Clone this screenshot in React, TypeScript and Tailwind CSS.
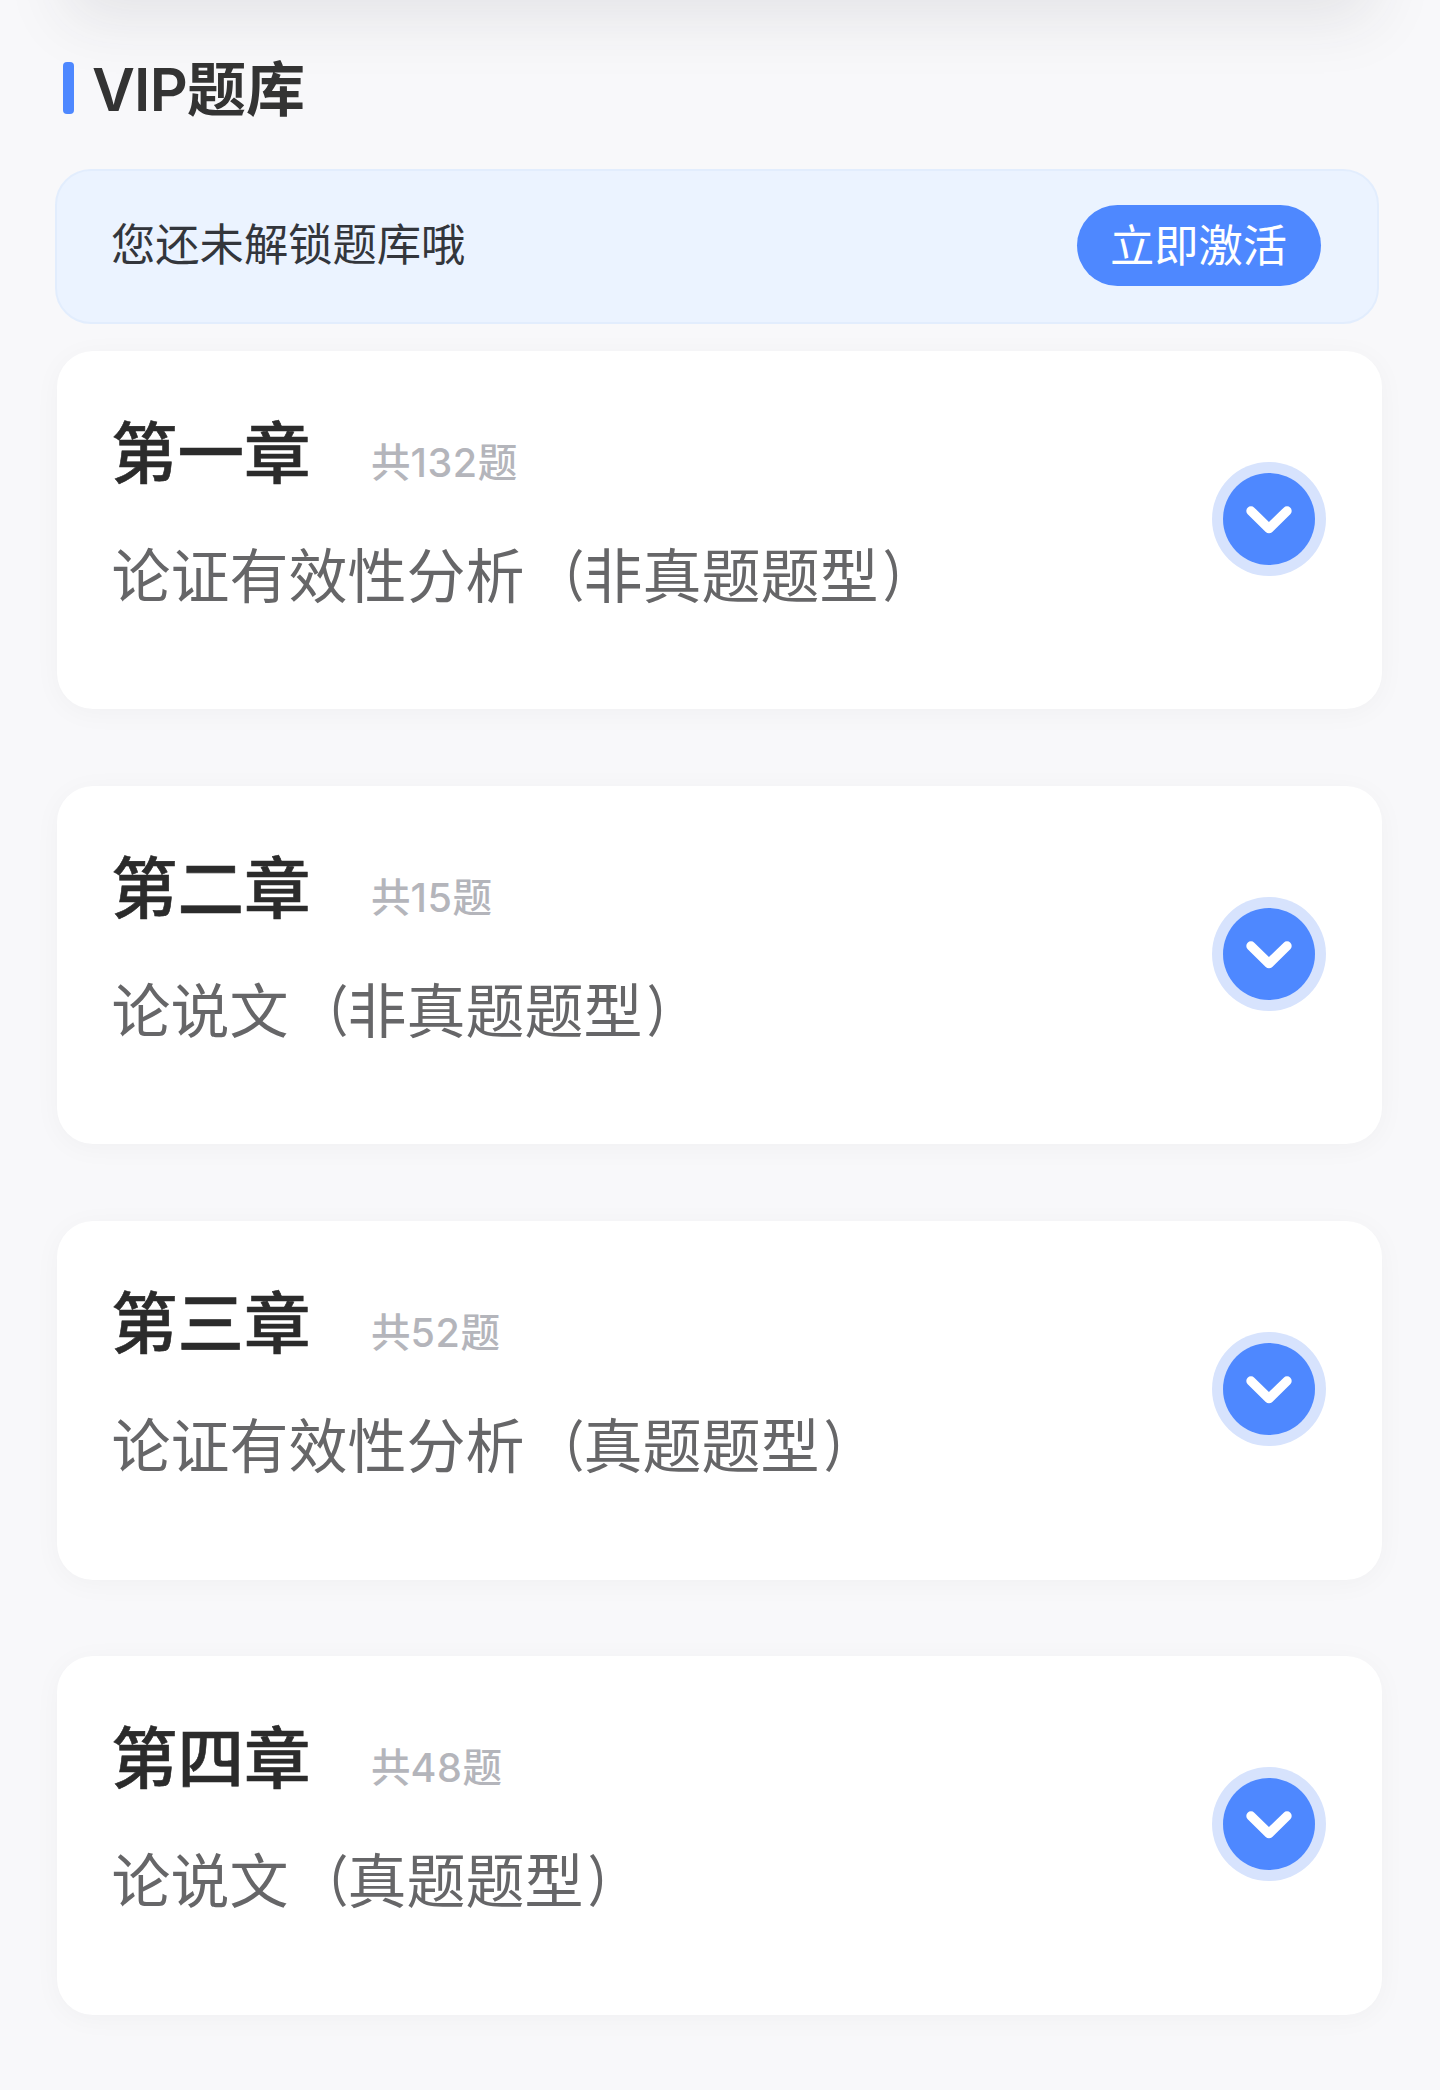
import React, { useState } from 'react';

interface Chapter {
  id: number;
  title: string;
  count: number;
  name: string;
  type: string;
}

const chapters: Chapter[] = [
  { id: 1, title: '第一章', count: 132, name: '论证有效性分析', type: '非真题题型' },
  { id: 2, title: '第二章', count: 15, name: '论说文', type: '非真题题型' },
  { id: 3, title: '第三章', count: 52, name: '论证有效性分析', type: '真题题型' },
  { id: 4, title: '第四章', count: 48, name: '论说文', type: '真题题型' },
];

function ExpandButton({ onClick }: { onClick: () => void }) {
  return (
    <button
      type="button"
      onClick={onClick}
      className="mt-[111px] flex h-[114px] w-[114px] shrink-0 items-center justify-center rounded-full bg-[#d7e3fd]"
    >
      <span className="flex h-[92px] w-[92px] items-center justify-center rounded-full bg-[#4e88ff] pt-[2px]">
        <svg width="46" height="28" viewBox="0 0 46 28" fill="none">
          <path
            d="M5 5 L23 22.6 L41 5"
            stroke="#fff"
            strokeWidth="9.4"
            strokeLinecap="round"
            strokeLinejoin="round"
          />
        </svg>
      </span>
    </button>
  );
}

function ChapterCard({ chapter, onToggle }: { chapter: Chapter; onToggle: () => void }) {
  return (
    <div className="flex h-[358.5px] justify-between rounded-[36px] bg-white pr-[56px] pl-[54.5px] shadow-[0_4px_28px_rgba(0,0,0,0.035)]">
      <div className="pt-[53px]">
        <div className="flex items-start">
          <h2 className="text-[66.5px] leading-[100px] font-medium text-[#2b2b2b] [-webkit-text-stroke:0.6px_#2b2b2b]">
            {chapter.title}
          </h2>
          <span className="ml-[60.5px] pt-[29px] text-[39.5px] leading-[60px] font-medium text-[#b4b5bb]">
            共<span className="tracking-[0.6px]">{chapter.count}</span>题
          </span>
        </div>
        <p className="mt-[29px] ml-[0.5px] text-[59px] leading-[88px] whitespace-nowrap text-[#666668]">
          {chapter.name}
          {/* narrower brackets, pulled towards the text they enclose */}
          <span className="inline-block origin-right scale-x-[0.75] scale-y-[0.94] font-medium">（</span>
          {chapter.type}
          <span className="inline-block origin-left translate-x-[4px] scale-x-[0.75] scale-y-[0.94] font-medium">）</span>
        </p>
      </div>
      <ExpandButton onClick={onToggle} />
    </div>
  );
}

export default function App() {
  const [openId, setOpenId] = useState<number | null>(null);

  return (
    <div className="h-[2090px] w-[1440px] overflow-hidden bg-[#f8f8fa] font-['Inter','Noto_Sans_CJK_SC',sans-serif]">
      {/* Bottom edge of the panel above */}
      <div className="mx-[68px] -mt-[200px] h-[200px] bg-white shadow-[0_18px_60px_rgba(45,50,60,0.1)]" />

      {/* Section title */}
      <div className="flex h-[169px] items-center gap-[18px] pt-[7px] pl-[62.5px]">
        <span className="h-[52px] w-[11.5px] rounded-[4px] bg-[#4e88ff]" />
        <h1 className="pt-[3px] text-[59px] leading-[88px] font-semibold text-[#333]">
          <span className="tracking-[-0.8px]">VIP</span>题库
        </h1>
      </div>

      {/* Unlock banner */}
      <div className="ml-[55px] flex h-[154.5px] w-[1323.5px] items-center justify-between rounded-[36px] border-2 border-[#e2edfd] bg-[#ebf3ff] pr-[56px] pb-[2px] pl-[54px]">
        <span className="text-[44.3px] text-[#33363c]">您还未解锁题库哦</span>
        <button
          type="button"
          className="flex h-[81.5px] w-[244px] items-center justify-center rounded-full bg-[#4e88ff] pt-[2px] text-[44.3px] text-white"
        >
          立即激活
        </button>
      </div>

      {/* Chapter list */}
      <div className="mt-[27px] ml-[56.5px] flex w-[1325px] flex-col gap-[76.8px]">
        {chapters.map((chapter) => (
          <ChapterCard
            key={chapter.id}
            chapter={chapter}
            onToggle={() => setOpenId(openId === chapter.id ? null : chapter.id)}
          />
        ))}
      </div>
    </div>
  );
}
